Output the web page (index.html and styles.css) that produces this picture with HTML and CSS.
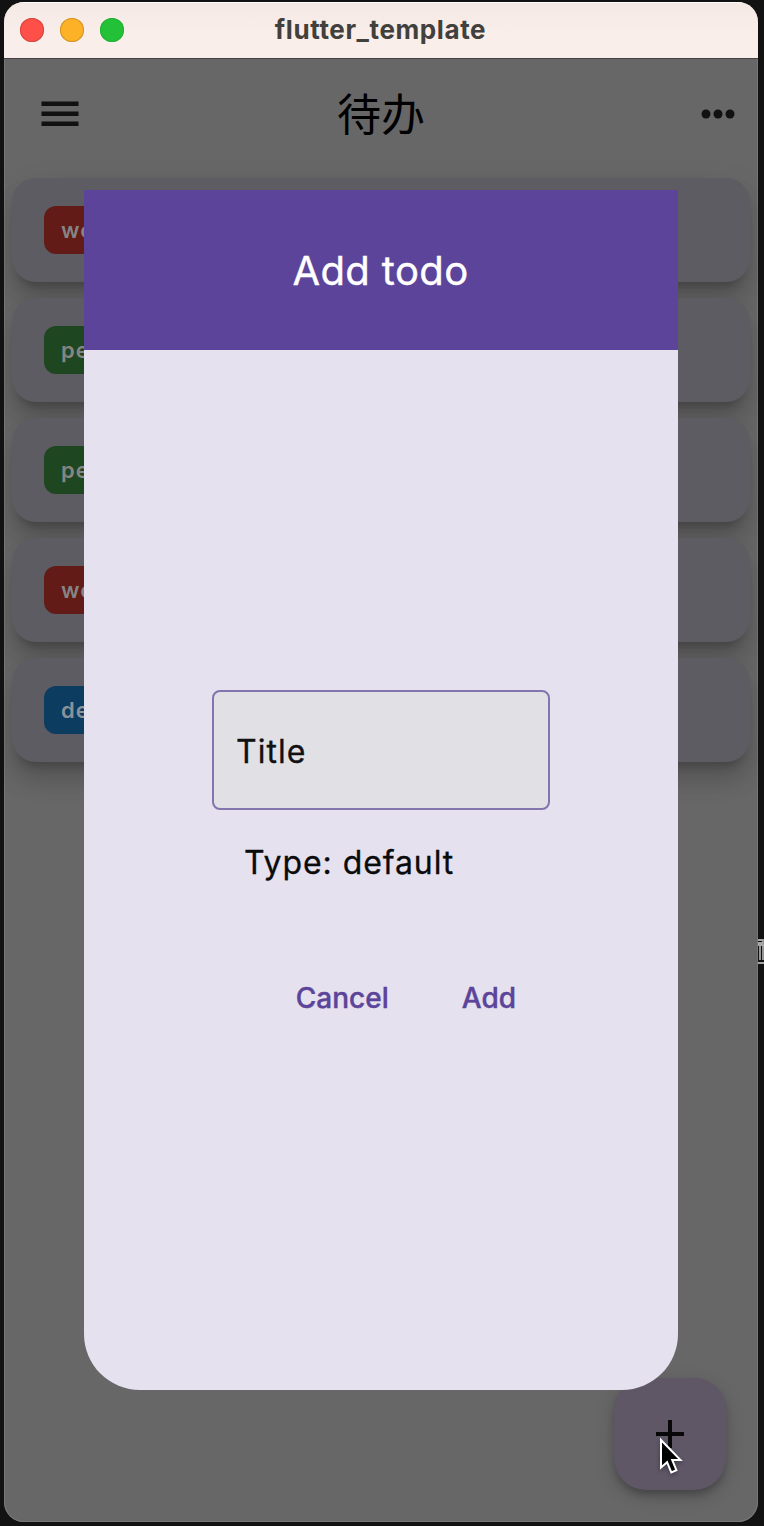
FILE: index.html
```html
<!DOCTYPE html>
<html lang="zh">
<head>
<meta charset="utf-8">
<title>flutter_template</title>
<link rel="stylesheet" href="styles.css">
</head>
<body>
<svg class="desktop-glyph" width="6" height="28" viewBox="0 0 6 28" fill="none" stroke="#a5a5a5" stroke-width="1.8"><path d="M0 2H5V5H0M0 7H6M2 8V22M5 8V22M0 25H6"/></svg>
<div class="window">
  <header class="titlebar">
    <div class="lights"><i class="light red"></i><i class="light yellow"></i><i class="light green"></i></div>
    <span class="window-title">flutter_template</span>
  </header>
  <main class="screen">
    <div class="appbar">
      <svg class="menu" width="38" height="26" viewBox="0 0 38 26" fill="#111"><path d="M.5 .5h37v4.5h-37zM.5 10.5h37v4.5h-37zM.5 20.5h37v4.5h-37z"/></svg>
      <h1 class="page-title">待办</h1>
      <svg class="more" width="34" height="10" viewBox="0 0 34 10" fill="#111"><circle cx="5" cy="5" r="4.5"/><circle cx="17" cy="5" r="4.5"/><circle cx="29" cy="5" r="4.5"/></svg>
    </div>
    <div class="list">
      <div class="card"><span class="tag work">work</span></div>
      <div class="card"><span class="tag personal">personal</span></div>
      <div class="card"><span class="tag personal">personal</span></div>
      <div class="card"><span class="tag work">work</span></div>
      <div class="card"><span class="tag default">default</span></div>
    </div>
    <div class="fab"><svg width="28" height="28" viewBox="0 0 28 28" fill="#080808"><path d="M12 0h4v12h12v4H16v12h-4V16H0v-4h12z"/></svg></div>
    <section class="dialog">
      <h2 class="dialog-head">Add todo</h2>
      <div class="form">
        <div class="field">Title</div>
        <div class="type">Type: default</div>
        <div class="actions"><span class="action cancel">Cancel</span><span class="action add">Add</span></div>
      </div>
    </section>
  </main>
</div>
<svg class="cursor" width="28" height="40" viewBox="0 0 28 40"><path d="M2 3V30.5L8.1 25.2L12.3 35.4L17.4 33.2L13.2 23H21.5Z" fill="#000" stroke="#fff" stroke-width="2" stroke-linejoin="miter"/></svg>
</body>
</html>
```
FILE: styles.css
```css
* { box-sizing: border-box; }
body {
  margin: 0;
  height: 1526px;
  padding: 2px 6px 4px 4px;
  background: #121212;
  font-family: Inter, "Noto Sans CJK SC", sans-serif;
  position: relative;
  overflow: hidden;
}
.window {
  width: 754px;
  height: 1520px;
  border-radius: 20px;
  overflow: hidden;
  background: #676767;
  box-shadow: inset 0 0 0 1px #777;
}
.titlebar {
  height: 56px;
  position: relative;
  display: flex;
  align-items: center;
  justify-content: center;
  background: linear-gradient(#f4e9e5, #f9eeea 60%, #faeeea);
  box-shadow: inset 0 1px #fff;
}
.lights { position: absolute; left: 16px; top: 16px; display: flex; gap: 16px; }
.light { width: 24px; height: 24px; border-radius: 50%; }
.red { background: #fe5048; box-shadow: inset 0 0 0 1px #d5453f; }
.yellow { background: #fdb127; box-shadow: inset 0 0 0 1px #d29427; }
.green { background: #23c138; box-shadow: inset 0 0 0 1px #23b036; }
.window-title { font-size: 26px; font-weight: 700; color: #42403c; line-height: 54px; padding-right: 1px; letter-spacing: .6px; }
.screen { height: 1464px; position: relative; border-top: 1px solid #414141; }
.appbar { height: 111px; display: grid; grid-template-columns: 38px 1fr 34px; align-items: center; padding: 0 23px 2px 37px; }
.page-title { margin: 0; padding: 0 18px 4px 0; text-align: center; font-size: 44px; line-height: 64px; font-weight: 400; color: #000; font-family: "Noto Sans CJK SC", sans-serif; }
.list { padding: 8px; display: flex; flex-direction: column; gap: 16px; }
.card {
  height: 104px;
  border-radius: 24px;
  background: #5d5c62;
  padding: 0 32px;
  display: flex;
  align-items: center;
  box-shadow: 0 10px 10px -6px rgba(0,0,0,.2), 0 18px 22px 0 rgba(0,0,0,.13), 0 12px 36px 2px rgba(0,0,0,.07);
}
.tag { height: 48px; line-height: 48px; border-radius: 12px; padding: 0 17px; font-size: 22px; font-weight: 600; letter-spacing: 1px; color: #858585; }
.work { background: #621b16; }
.personal { background: #1e4620; }
.default { background: #0d3c61; color: #8b9299; }
.fab {
  position: absolute;
  left: 610px;
  top: 1319px;
  width: 112px;
  height: 112px;
  border-radius: 32px;
  background: #5f5666;
  display: grid;
  place-items: center;
  box-shadow: 0 6px 10px -2px rgba(0,0,0,.28), 0 6px 20px rgba(0,0,0,.14);
}
.dialog {
  position: absolute;
  left: 80px;
  top: 131px;
  width: 594px;
  height: 1200px;
  border-radius: 0 0 56px 56px;
  background: #e5e1ee;
  overflow: hidden;
}
.dialog-head { margin: 0; height: 160px; line-height: 162px; background: #5b4499; color: #fff; text-align: center; font-size: 40px; font-weight: 400; letter-spacing: .4px; -webkit-text-stroke: .4px; padding-right: 1px; }
.form { width: 338px; margin: 340px auto 0 128px; }
.field { height: 120px; border: 2px solid #8375ad; border-radius: 8px; background: #e1e0e5; color: #111; font-size: 32px; font-weight: 400; line-height: 119px; padding-left: 22px; letter-spacing: 1px; -webkit-text-stroke: .3px; }
.type { padding-left: 32px; margin-top: 33px; font-size: 32px; font-weight: 400; line-height: 40px; letter-spacing: .92px; color: #0b0b0b; white-space: nowrap; -webkit-text-stroke: .3px; }
.actions { display: flex; justify-content: flex-end; gap: 73px; padding-right: 34px; margin-top: 95px; }
.action { color: #5b4499; font-size: 28px; font-weight: 500; line-height: 40px; letter-spacing: 0; -webkit-text-stroke: .4px; }
.cursor { position: absolute; left: 659px; top: 1437px; filter: drop-shadow(0 2px 2px rgba(0,0,0,.3)); }
.desktop-glyph { position: absolute; left: 758px; top: 938px; }
```
